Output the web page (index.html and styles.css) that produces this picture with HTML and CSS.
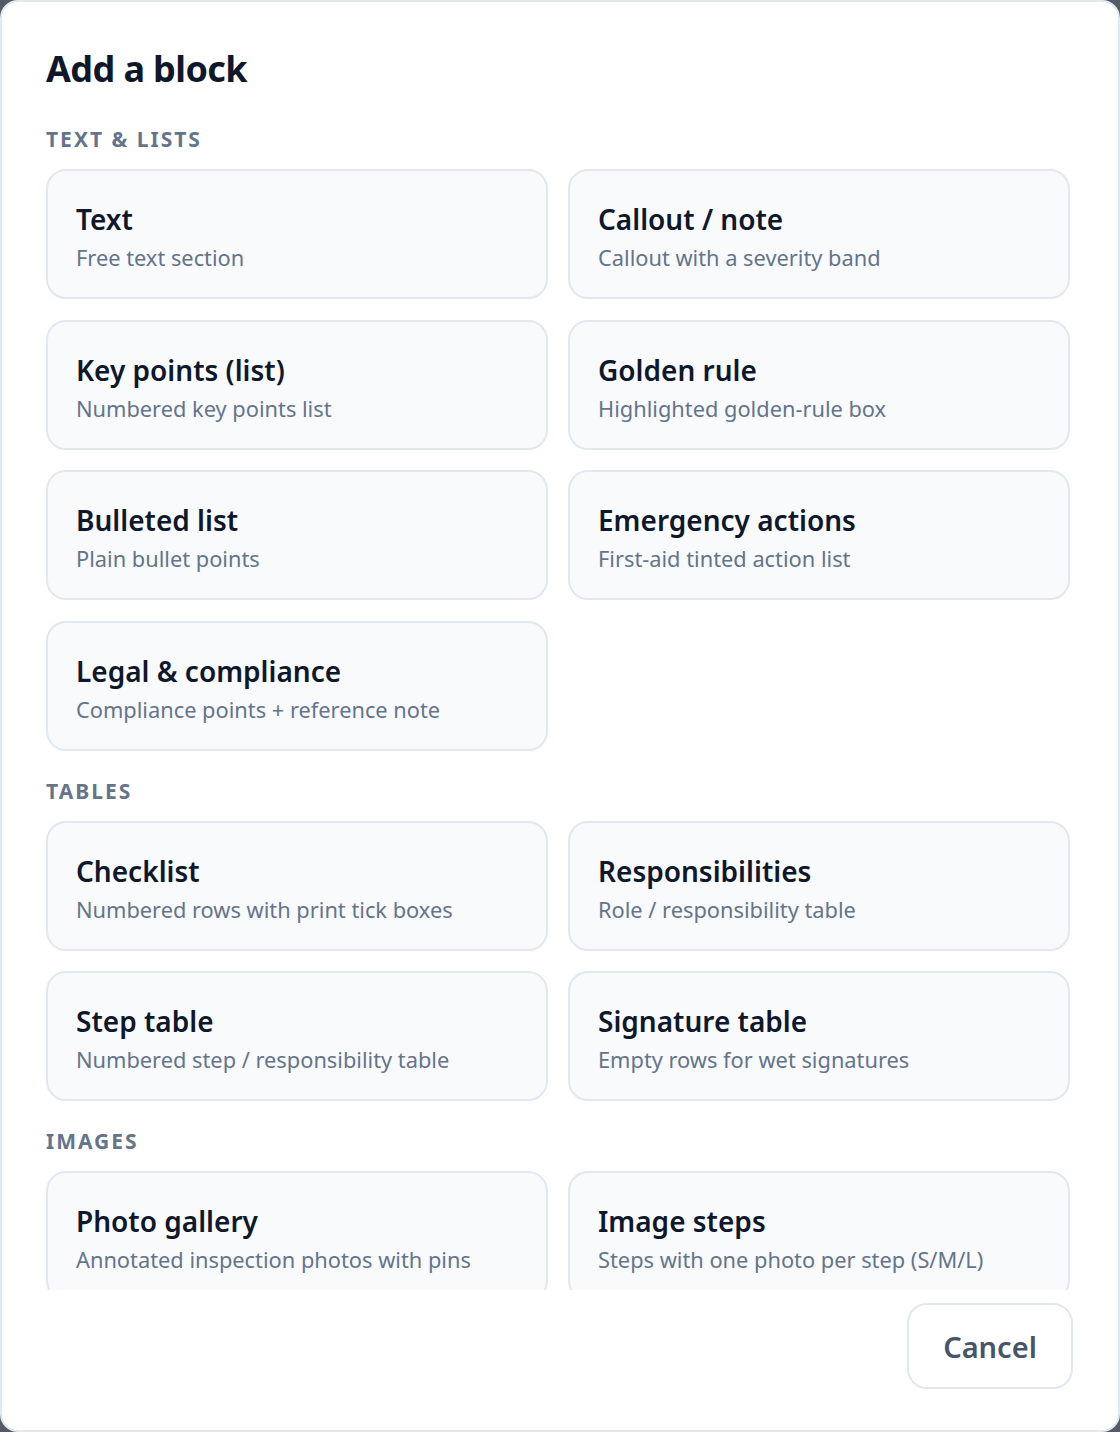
FILE: index.html
```html
<!DOCTYPE html>
<html lang="en">
<head>
<meta charset="utf-8">
<title>Add a block</title>
<link rel="stylesheet" href="styles.css">
</head>
<body>
<div class="dialog">
  <div class="dialog-body">
    <h1 class="dialog-title">Add a block</h1>

    <section class="group">
      <h2 class="group-label">Text &amp; lists</h2>
      <div class="grid">
        <button class="card"><span class="card-title">Text</span><span class="card-desc">Free text section</span></button>
        <button class="card"><span class="card-title">Callout / note</span><span class="card-desc">Callout with a severity band</span></button>
        <button class="card"><span class="card-title">Key points (list)</span><span class="card-desc">Numbered key points list</span></button>
        <button class="card"><span class="card-title">Golden rule</span><span class="card-desc">Highlighted golden-rule box</span></button>
        <button class="card"><span class="card-title">Bulleted list</span><span class="card-desc">Plain bullet points</span></button>
        <button class="card"><span class="card-title">Emergency actions</span><span class="card-desc">First-aid tinted action list</span></button>
        <button class="card"><span class="card-title">Legal &amp; compliance</span><span class="card-desc">Compliance points + reference note</span></button>
      </div>
    </section>

    <section class="group">
      <h2 class="group-label">Tables</h2>
      <div class="grid">
        <button class="card"><span class="card-title">Checklist</span><span class="card-desc">Numbered rows with print tick boxes</span></button>
        <button class="card"><span class="card-title">Responsibilities</span><span class="card-desc">Role / responsibility table</span></button>
        <button class="card"><span class="card-title">Step table</span><span class="card-desc">Numbered step / responsibility table</span></button>
        <button class="card"><span class="card-title">Signature table</span><span class="card-desc">Empty rows for wet signatures</span></button>
      </div>
    </section>

    <section class="group">
      <h2 class="group-label">Images</h2>
      <div class="grid">
        <button class="card"><span class="card-title">Photo gallery</span><span class="card-desc">Annotated inspection photos with pins</span></button>
        <button class="card"><span class="card-title">Image steps</span><span class="card-desc">Steps with one photo per step (S/M/L)</span></button>
      </div>
    </section>
  </div>
  <div class="dialog-footer">
    <button class="btn-cancel">Cancel</button>
  </div>
</div>
</body>
</html>
```

FILE: styles.css
```css
* { box-sizing: border-box; }

html, body {
  margin: 0;
  padding: 0;
}

body {
  background: #555b66;
  font-family: "Noto Sans", "Open Sans", "DejaVu Sans", sans-serif;
  width: 1120px;
  height: 1432px;
  overflow: hidden;
}

.dialog {
  width: 1120px;
  height: 1432px;
  background: #ffffff;
  border: 2px solid #e2e8f0;
  border-radius: 18px;
  display: flex;
  flex-direction: column;
  overflow: hidden;
}

.dialog-body {
  flex: 1;
  min-height: 0;
  overflow: hidden;
  padding: 43px 48px 0 44px;
}

.dialog-title {
  margin: 0;
  font-size: 36px;
  line-height: 48px;
  font-weight: 700;
  color: #0f172a;
  letter-spacing: -0.6px;
}

.group {
  margin-top: 26px;
}

.dialog-title + .group {
  margin-top: 32px;
}

.group-label {
  margin: 0 0 16px;
  font-size: 21px;
  line-height: 28px;
  font-weight: 700;
  color: #64748b;
  text-transform: uppercase;
  letter-spacing: 2px;
}

.grid {
  display: grid;
  grid-template-columns: 1fr 1fr;
  column-gap: 20px;
  row-gap: 20.5px;
}

.card {
  display: flex;
  flex-direction: column;
  align-items: flex-start;
  text-align: left;
  background: #f8fafc;
  border: 2px solid #e2e8f0;
  border-radius: 20px;
  padding: 30px 28px 24px;
  font-family: inherit;
  cursor: pointer;
}

.card-title {
  font-size: 28px;
  line-height: 36px;
  font-weight: 600;
  color: #0f172a;
}

.card-desc {
  margin-top: 6px;
  font-size: 21.8px;
  line-height: 30px;
  font-weight: 400;
  color: #64748b;
}

.dialog-footer {
  flex: none;
  display: flex;
  justify-content: flex-end;
  padding: 13px 45px 41px;
}

.btn-cancel {
  width: 166px;
  height: 86px;
  background: #ffffff;
  border: 2px solid #e2e8f0;
  border-radius: 20px;
  font-family: inherit;
  font-size: 29px;
  font-weight: 600;
  color: #475569;
  cursor: pointer;
}
```
